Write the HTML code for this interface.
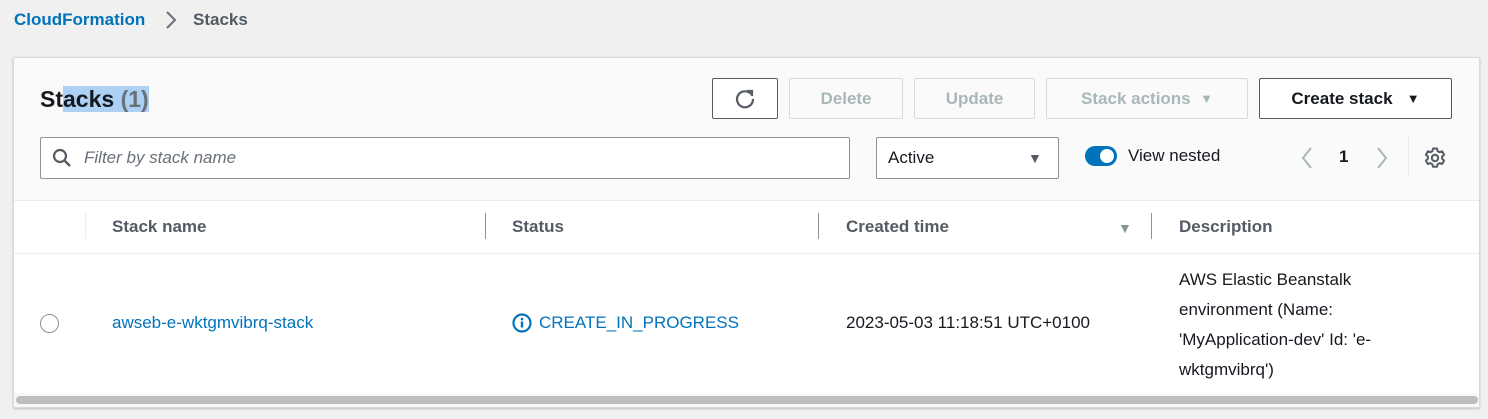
<!DOCTYPE html>
<html><head><meta charset="utf-8"><style>
*{box-sizing:border-box;margin:0;padding:0}
body{width:1488px;height:419px;background:#f0f0f0;font-family:"Liberation Sans",sans-serif;position:relative;overflow:hidden;color:#16191f}
.a{position:absolute}
.bc{top:10px;left:14px;font-size:17px;font-weight:bold;color:#0073bb}
.panel{left:13px;top:57px;width:1467px;height:351px;background:#fafafa;border:1px solid #d5dbdb;box-shadow:0 1px 2px rgba(0,0,0,.2)}
.btn{position:absolute;top:78px;height:41px;border:1px solid #d5dbdb;border-radius:2px;font-size:17px;font-weight:bold;color:#aab7b8;display:flex;align-items:center;justify-content:center;background:#fafafa}
.btn.on{border-color:#545b64;color:#545b64;background:#fff}
.th{font-size:17px;font-weight:bold;color:#545b64;top:217px}
.sep{width:1px;height:26px;background:#879596;top:213px}
.td{font-size:17px;top:313px}
</style></head><body>
<div class="a bc">CloudFormation</div>
<svg class="a" style="left:164px;top:10px" width="14" height="20"><path d="M3 2 L11 10 L3 18" fill="none" stroke="#687078" stroke-width="2"/></svg>
<div class="a bc" style="left:193px;color:#545b64">Stacks</div>
<div class="a panel"></div>
<div class="a" style="left:40px;top:86px;font-size:23px;font-weight:bold">St<span style="background:#acd1f5">acks <span style="color:#687078">(1)</span></span></div>
<div class="btn on" style="left:712px;width:66px"><svg width="22" height="22" viewBox="0 0 22 22"><path d="M17 6 A8 8 0 1 0 19 11" fill="none" stroke="#545b64" stroke-width="2.2"/><path d="M13 3 L18 3 L18 8" fill="none" stroke="#545b64" stroke-width="2.2"/></svg></div>
<div class="btn" style="left:789px;width:114px">Delete</div>
<div class="btn" style="left:914px;width:121px">Update</div>
<div class="btn" style="left:1046px;width:202px">Stack actions&nbsp;&nbsp;<span style="font-size:13px">&#9660;</span></div>
<div class="btn on" style="left:1259px;width:193px;color:#16191f">Create stack&nbsp;&nbsp;&nbsp;<span style="font-size:13px">&#9660;</span></div>
<div class="a" style="left:40px;top:137px;width:810px;height:42px;border:1px solid #879596;border-radius:2px;background:#fff"></div>
<svg class="a" style="left:52px;top:148px" width="20" height="20" viewBox="0 0 20 20"><circle cx="8" cy="8" r="6" fill="none" stroke="#545b64" stroke-width="2.2"/><path d="M12.5 12.5 L18 18" stroke="#545b64" stroke-width="2.4"/></svg>
<div class="a" style="left:84px;top:148px;font-size:17px;font-style:italic;color:#687078">Filter by stack name</div>
<div class="a" style="left:876px;top:137px;width:183px;height:42px;border:1px solid #879596;border-radius:2px;background:#fff"></div>
<div class="a" style="left:888px;top:148px;font-size:17px">Active</div>
<div class="a" style="left:1028px;top:150px;font-size:14px;color:#545b64">&#9660;</div>
<div class="a" style="left:1085px;top:146px;width:32px;height:20px;border-radius:10px;background:#0073bb"><div class="a" style="left:15px;top:3px;width:14px;height:14px;border-radius:50%;background:#fff"></div></div>
<div class="a" style="left:1128px;top:146px;font-size:17px">View nested</div>
<svg class="a" style="left:1300px;top:146px" width="14" height="24"><path d="M11 2 L3 12 L11 22" fill="none" stroke="#aab7b8" stroke-width="2"/></svg>
<div class="a" style="left:1339px;top:147px;font-size:17px;font-weight:bold">1</div>
<svg class="a" style="left:1375px;top:146px" width="14" height="24"><path d="M3 2 L11 12 L3 22" fill="none" stroke="#aab7b8" stroke-width="2"/></svg>
<div class="a" style="left:1408px;top:137px;width:1px;height:40px;background:#eaeded"></div>
<svg class="a" style="left:1423px;top:146px" width="24" height="24" viewBox="0 0 24 24"><circle cx="12" cy="12" r="3.2" fill="none" stroke="#545b64" stroke-width="2"/><path d="M10 2.5h4l.6 2.6 2 1.1 2.5-.9 2 3.4-2 1.8v2.3l2 1.8-2 3.4-2.5-.9-2 1.1-.6 2.6h-4l-.6-2.6-2-1.1-2.5.9-2-3.4 2-1.8v-2.3l-2-1.8 2-3.4 2.5.9 2-1.1z" fill="none" stroke="#545b64" stroke-width="2" stroke-linejoin="round"/></svg>
<div class="a" style="left:14px;top:200px;width:1465px;height:193px;background:#fff;border-top:1px solid #eaeded"></div>
<div class="a" style="left:14px;top:253px;width:1465px;height:1px;background:#eaeded"></div>
<div class="a sep" style="left:85px;background:#eaeded"></div>
<div class="a th" style="left:112px">Stack name</div>
<div class="a sep" style="left:485px"></div>
<div class="a th" style="left:512px">Status</div>
<div class="a sep" style="left:818px"></div>
<div class="a th" style="left:846px">Created time</div>
<div class="a" style="left:1118px;top:220px;font-size:14px;color:#879596">&#9660;</div>
<div class="a sep" style="left:1151px"></div>
<div class="a th" style="left:1179px">Description</div>
<div class="a" style="left:40px;top:314px;width:19px;height:19px;border:1.5px solid #879596;border-radius:50%;background:#fff"></div>
<div class="a td" style="left:112px;color:#0073bb">awseb-e-wktgmvibrq-stack</div>
<svg class="a" style="left:512px;top:313px" width="20" height="20" viewBox="0 0 20 20"><circle cx="10" cy="10" r="8.5" fill="none" stroke="#0073bb" stroke-width="2.2"/><rect x="8.8" y="8.5" width="2.4" height="6" fill="#0073bb"/><rect x="8.8" y="5" width="2.4" height="2.3" fill="#0073bb"/></svg>
<div class="a td" style="left:539px;color:#0073bb">CREATE_IN_PROGRESS</div>
<div class="a td" style="left:846px">2023-05-03 11:18:51 UTC+0100</div>
<div class="a" style="left:1179px;top:265px;font-size:17px;line-height:30px;width:200px">AWS Elastic Beanstalk<br>environment (Name:<br>'MyApplication-dev' Id: 'e-<br>wktgmvibrq')</div>
<div class="a" style="left:14px;top:393px;width:1465px;height:14px;background:#f7f7f7"></div>
<div class="a" style="left:16px;top:396px;width:1462px;height:8px;border-radius:4px;background:#bdbdbd"></div>
</body></html>
